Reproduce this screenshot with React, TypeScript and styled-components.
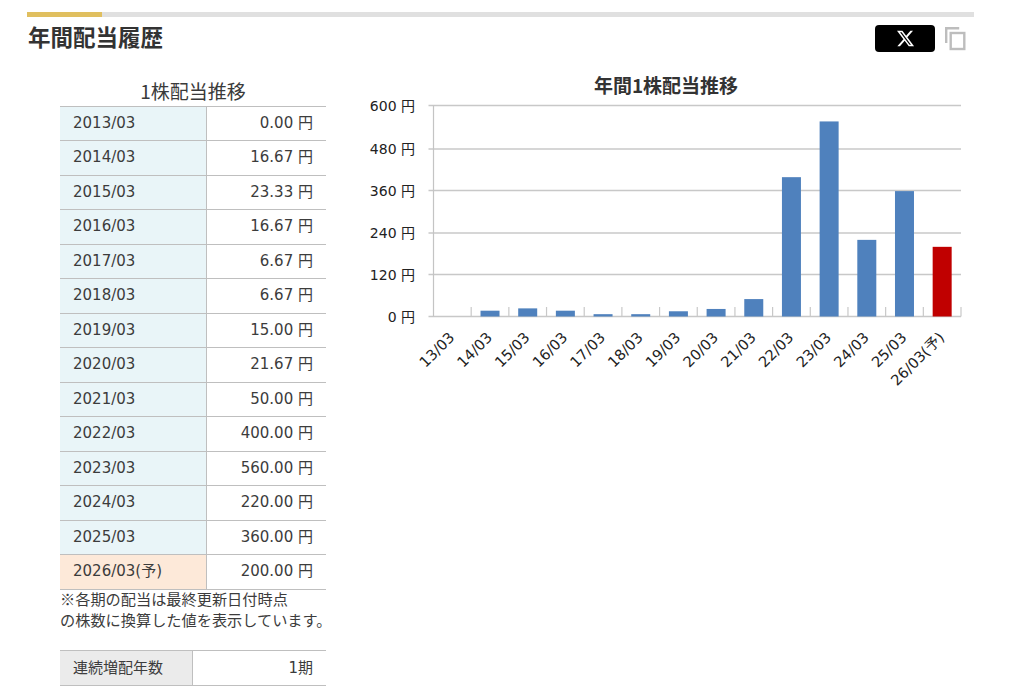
import React from 'react';
import styled, { createGlobalStyle } from 'styled-components';

const BASE_FONT = '"DejaVu Sans", "Noto Sans CJK JP", sans-serif';
const CJK_FONT = '"Noto Sans CJK JP", "DejaVu Sans", sans-serif';

const GlobalStyle = createGlobalStyle`
  html, body {
    margin: 0;
    padding: 0;
    background: #fff;
    color: #333;
    font-family: ${BASE_FONT};
    overflow: hidden;
  }
`;

const Page = styled.div`
  width: 1014px;
  height: 699px;
  padding: 12px 40px 0 27px;
  box-sizing: border-box;
  overflow: hidden;
`;

const TopRule = styled.div`
  height: 5px;
  background: #e0e0e0;
`;

const TopRuleAccent = styled.div`
  width: 75px;
  height: 100%;
  background: #e0bf5f;
`;

const Header = styled.header`
  display: flex;
  justify-content: space-between;
  align-items: flex-start;
  height: 54px;
`;

const Heading = styled.h2`
  margin: 3px 0 0 1px;
  font-family: ${CJK_FONT};
  font-size: 22.5px;
  line-height: 32px;
  font-weight: 700;
  color: #333;
`;

const ShareTools = styled.div`
  display: flex;
  align-items: flex-start;
  gap: 9px;
  padding: 8px 8px 0 0;
`;

const XButton = styled.div`
  width: 60px;
  height: 27px;
  background: #000;
  border-radius: 4px;
  display: flex;
  align-items: center;
  justify-content: center;
`;

const Columns = styled.div`
  display: flex;
  align-items: flex-start;
  padding-left: 33px;
`;

const LeftColumn = styled.div`
  width: 266px;
  flex: none;
`;

const TableTitle = styled.div`
  font-family: ${CJK_FONT};
  font-size: 19px;
  line-height: 35px;
  height: 32.5px;
  padding-top: 2px;
  text-align: center;
  color: #3a3a3a;
`;

const Table = styled.div<{ $keyWidth: number }>`
  display: grid;
  grid-template-columns: ${(p) => p.$keyWidth}px 1fr;
  border-top: 1px solid #bfbfbf;
`;

const KeyCell = styled.div<{ $tone: 'blue' | 'orange' | 'gray'; $height: number }>`
  height: ${(p) => p.$height}px;
  box-sizing: border-box;
  padding: 0 0 1px 13px;
  display: flex;
  align-items: center;
  font-size: 15px;
  line-height: 20px;
  color: #3c3c3c;
  background: ${(p) =>
    p.$tone === 'blue' ? '#e9f5f8' : p.$tone === 'orange' ? '#fde9d9' : '#ebebeb'};
  border-right: 1px solid #bfbfbf;
  border-bottom: 1px solid #bfbfbf;
`;

const ValueCell = styled.div<{ $height: number }>`
  height: ${(p) => p.$height}px;
  box-sizing: border-box;
  padding: 0 13px 1px 0;
  display: flex;
  align-items: center;
  justify-content: flex-end;
  font-size: 15px;
  line-height: 20px;
  color: #3c3c3c;
  border-bottom: 1px solid #bfbfbf;
`;

const Note = styled.p`
  margin: -1.5px 0 0;
  font-family: ${CJK_FONT};
  font-size: 15.2px;
  line-height: 21px;
  color: #3c3c3c;
  white-space: nowrap;
`;

const StreakWrap = styled.div`
  margin-top: 20px;
`;

const RightColumn = styled.div`
  margin-left: 35px;
  width: 610px;
  flex: none;
`;

const ChartTitle = styled.div`
  width: 610px;
  font-family: ${CJK_FONT};
  font-size: 19px;
  font-weight: 700;
  line-height: 28px;
  height: 20px;
  text-align: center;
  color: #333;
`;

const ChartSvg = styled.svg`
  display: block;
  font-family: ${BASE_FONT};
  font-size: 14px;
  fill: #222;
`;

const AxisLabel = styled.text`
  font-size: 14.6px;
`;

type Row = { term: string; value: number; forecast?: boolean };

const rows: Row[] = [
  { term: '2013/03', value: 0 },
  { term: '2014/03', value: 16.67 },
  { term: '2015/03', value: 23.33 },
  { term: '2016/03', value: 16.67 },
  { term: '2017/03', value: 6.67 },
  { term: '2018/03', value: 6.67 },
  { term: '2019/03', value: 15 },
  { term: '2020/03', value: 21.67 },
  { term: '2021/03', value: 50 },
  { term: '2022/03', value: 400 },
  { term: '2023/03', value: 560 },
  { term: '2024/03', value: 220 },
  { term: '2025/03', value: 360 },
  { term: '2026/03(予)', value: 200, forecast: true },
];

const AXIS_X = 72.5;
const AXIS_Y = 225.5;
const TOP_Y = 14.5;
const RIGHT_X = 600;
const STEP = (RIGHT_X - AXIS_X) / 14;
const BAR_SCALE = 209 / 600;
const yTicks = [
  { value: 0, y: 225.5 },
  { value: 120, y: 183.5 },
  { value: 240, y: 142 },
  { value: 360, y: 99.5 },
  { value: 480, y: 58 },
  { value: 600, y: 14.5 },
];

function Chart() {
  return (
    <ChartSvg width={610} height={300} viewBox="0 0 610 300">
      {yTicks.map((t) => (
        <g key={t.value}>
          <line x1={AXIS_X - 5} x2={RIGHT_X} y1={t.y} y2={t.y} stroke="#c8c8c8" strokeWidth={1.3} />
          <text x={54} y={t.y + 5} textAnchor="end">
            {t.value} 円
          </text>
        </g>
      ))}
      <line x1={AXIS_X} x2={AXIS_X} y1={TOP_Y} y2={AXIS_Y} stroke="#c4c4c4" strokeWidth={1.2} />
      {rows.map((r, i) => {
        const tickX = AXIS_X + STEP * (i + 1);
        const center = AXIS_X + STEP * (i + 0.5);
        const h = r.value * BAR_SCALE;
        const label = r.term.slice(2);
        return (
          <g key={r.term}>
            <line x1={tickX} x2={tickX} y1={216} y2={AXIS_Y} stroke="#c8c8c8" strokeWidth={1.2} />
            {r.value > 0 && (
              <rect
                x={center - 9.5}
                y={AXIS_Y - h}
                width={19}
                height={h}
                fill={r.forecast ? '#c00000' : '#4f81bd'}
              />
            )}
            <AxisLabel
              x={center + 3}
              y={AXIS_Y + 22}
              textAnchor="end"
              transform={`rotate(-45 ${center + 3} ${AXIS_Y + 22})`}
            >
              {label}
            </AxisLabel>
          </g>
        );
      })}
    </ChartSvg>
  );
}

export default function App() {
  return (
    <Page>
      <GlobalStyle />
      <TopRule>
        <TopRuleAccent />
      </TopRule>
      <Header>
        <Heading>年間配当履歴</Heading>
        <ShareTools>
          <XButton>
            <svg width="19" height="19" viewBox="0 0 24 24" fill="#fff">
              <path d="M18.244 2.25h3.308l-7.227 8.26 8.502 11.24H16.17l-5.214-6.817L4.99 21.75H1.68l7.73-8.835L1.254 2.25H8.08l4.713 6.231zm-1.161 17.52h1.833L7.084 4.126H5.117z" />
            </svg>
          </XButton>
          <svg width="22" height="26" viewBox="0 0 22 26" fill="none" stroke="#bdbdbd" strokeWidth="2.4">
            <path d="M2.2 18V3.2h13" />
            <rect x="6.7" y="8" width="13.6" height="16" />
          </svg>
        </ShareTools>
      </Header>
      <Columns>
        <LeftColumn>
          <TableTitle>1株配当推移</TableTitle>
          <Table $keyWidth={147}>
            {rows.map((r) => (
              <React.Fragment key={r.term}>
                <KeyCell $tone={r.forecast ? 'orange' : 'blue'} $height={34.5}>
                  {r.term}
                </KeyCell>
                <ValueCell $height={34.5}>{r.value.toFixed(2)} 円</ValueCell>
              </React.Fragment>
            ))}
          </Table>
          <Note>
            ※各期の配当は最終更新日付時点
            <br />
            の株数に換算した値を表示しています。
          </Note>
          <StreakWrap>
            <Table $keyWidth={133}>
              <KeyCell $tone="gray" $height={35}>
                連続増配年数
              </KeyCell>
              <ValueCell $height={35}>1期</ValueCell>
            </Table>
          </StreakWrap>
        </LeftColumn>
        <RightColumn>
          <ChartTitle>年間1株配当推移</ChartTitle>
          <Chart />
        </RightColumn>
      </Columns>
    </Page>
  );
}
